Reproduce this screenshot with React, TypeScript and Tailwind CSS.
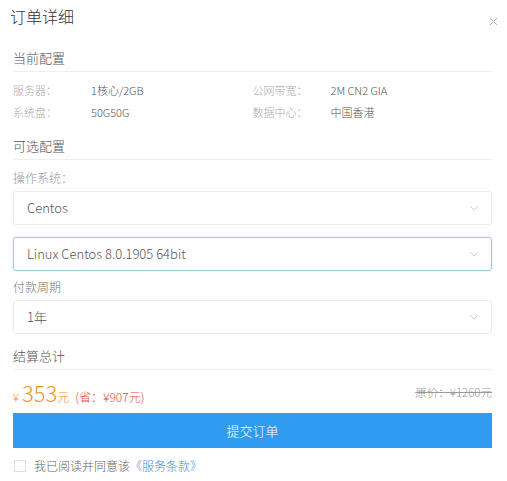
import React from "react";

const font = { fontFamily: '"Noto Sans CJK SC", "Noto Sans", sans-serif' };

function Chevron() {
  return (
    <svg width="10" height="6" viewBox="0 0 10 6" className="shrink-0">
      <path d="M1 1l4 4 4-4" fill="none" stroke="#cfcfcf" strokeWidth="1" />
    </svg>
  );
}

function Select({ value, active }: { value: string; active?: boolean }) {
  return (
    <div
      className={
        active
          ? "flex h-[34px] items-center justify-between rounded-[3px] border border-[#9ccadd] pl-[13px] pr-[12px] shadow-[0_0_2px_rgba(120,180,210,0.35)]"
          : "flex h-[34px] items-center justify-between rounded-[3px] border border-[#ebebeb] pl-[13px] pr-[12px]"
      }
    >
      <span className="text-[13px] font-light text-[#555]">{value}</span>
      <Chevron />
    </div>
  );
}

function Heading({ children, className }: { children: React.ReactNode; className: string }) {
  return (
    <div className={"flex items-center border-b border-[#eee] text-[13px] font-light text-[#555] " + className}>
      {children}
    </div>
  );
}

function Info({ label, value }: { label: string; value: string }) {
  return (
    <div className="flex h-[22px] items-center text-[11px] font-light">
      <span className="w-[78px] text-[#aaa]">{label}</span>
      <span className="text-[#555]">{value}</span>
    </div>
  );
}

export default function App() {
  return (
    <div style={font} className="h-[481px] w-[507px] bg-white pl-[13px] pr-[15px]">
      <div className="flex h-[32px] items-center justify-between">
        <span className="-ml-[3px] text-[16px] font-light text-[#333]">订单详细</span>
        <svg width="9" height="9" viewBox="0 0 9 9" className="mt-[10px] mr-[-6px]">
          <path d="M1 1l7 7M8 1l-7 7" stroke="#aaa" strokeWidth="1" />
        </svg>
      </div>

      <Heading className="mt-[12px] h-[28px]">当前配置</Heading>
      <div className="grid grid-cols-2 pt-[7px]">
        <Info label="服务器：" value="1核心/2GB" />
        <Info label="公网带宽：" value="2M CN2 GIA" />
        <Info label="系统盘：" value="50G50G" />
        <Info label="数据中心：" value="中国香港" />
      </div>

      <Heading className="mt-[10px] h-[27px]">可选配置</Heading>
      <div className="mt-[8px] flex h-[20px] items-center text-[12px] font-light text-[#999]">操作系统：</div>
      <div className="mt-[3px]">
        <Select value="Centos" />
      </div>
      <div className="mt-[12px]">
        <Select value="Linux Centos 8.0.1905 64bit" active />
      </div>
      <div className="mt-[6px] flex h-[20px] items-center text-[12px] font-light text-[#777]">付款周期</div>
      <div className="mt-[3px]">
        <Select value="1年" />
      </div>

      <Heading className="mt-[8px] h-[28px]">结算总计</Heading>
      <div className="mt-[10px] flex h-[26px] items-center justify-between font-light">
        <div className="flex items-baseline">
          <span className="text-[11px] text-[#f0922b]">¥</span>
          <span className="ml-[3px] text-[22px] leading-none text-[#f0922b]">353</span>
          <span className="text-[12px] text-[#f0922b]">元</span>
          <span className="ml-[6px] text-[12px] text-[#e2473f]">(省：¥907元)</span>
        </div>
        <span className="text-[11.5px] text-[#999] line-through">原价：¥1260元</span>
      </div>
      <button className="mt-[7px] flex h-[35px] w-full items-center justify-center bg-[#2f9cf1] text-[13px] font-light text-white">
        提交订单
      </button>
      <div className="mt-[8px] flex h-[20px] items-center font-light">
        <span className="ml-px h-[12px] w-[12px] border border-[#ddd] bg-white" />
        <span className="ml-[8px] text-[12px] text-[#666]">我已阅读并同意该</span>
        <span className="text-[12px] text-[#3a8fe0]">《服务条款》</span>
      </div>
    </div>
  );
}
